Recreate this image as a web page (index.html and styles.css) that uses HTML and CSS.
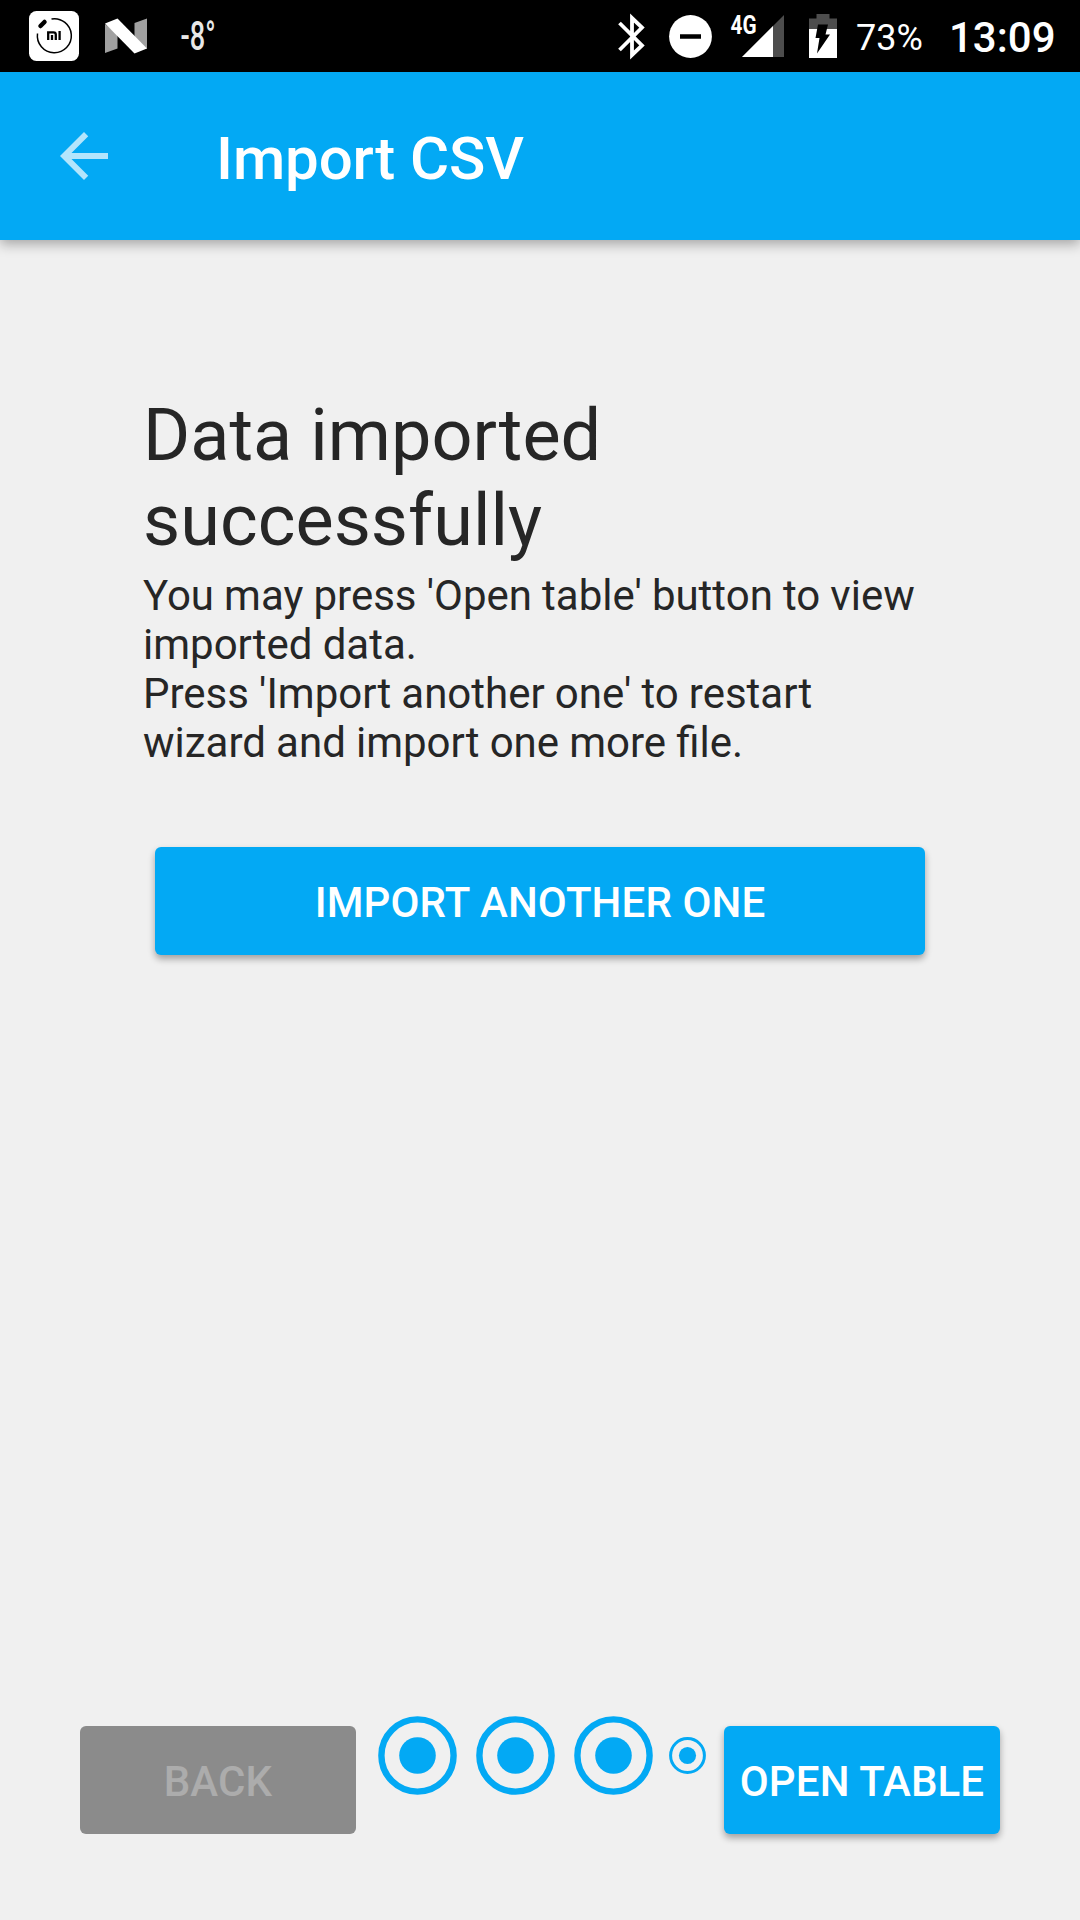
FILE: index.html
```html
<!DOCTYPE html>
<html lang="en">
<head>
<meta charset="utf-8">
<title>Import CSV</title>
<link rel="stylesheet" href="styles.css">
</head>
<body>
<header class="status-bar">
  <div class="status-group">
    <svg width="50" height="72" viewBox="29 0 50 72">
      <rect x="29" y="11" width="50" height="50" rx="7.5" fill="#fff"/>
      <path d="M51.500 19A17 17 0 1 1 37.500 33.500" fill="none" stroke="#000" stroke-width="1.500"/>
      <path d="M40.500 26L44.500 22" stroke="#000" stroke-width="4.500" stroke-linecap="round"/>
      <path d="M48.200 40V32.300H53.500Q55.800 32.300 55.800 34.500V40M52 35V40M59.600 31V40" fill="none" stroke="#000" stroke-width="2.300"/>
    </svg>
    <svg width="42" height="72" viewBox="105 0 42 72">
      <path d="M105 24L117.500 34V48.500L105 53ZM134.500 23L147 18.500V49L134.500 38Z" fill="#a0a0a0"/>
      <path d="M105 23.500L117.500 18.500L147 48.500L134.500 53.500Z" fill="#fff"/>
    </svg>
    <svg class="temperature" width="60" height="72" viewBox="180 0 60 72">
      <text x="180.500" y="50" font-size="40" textLength="35" lengthAdjust="spacingAndGlyphs">-8°</text>
    </svg>
  </div>
  <div class="status-group status-right">
    <svg class="bluetooth" width="28" height="72" viewBox="618 0 28 72">
      <path d="M619.500 23L642 45.500L632 55V18L642 27.500L619.500 50" fill="none" stroke="#fff" stroke-width="3.800"/>
    </svg>
    <svg class="dnd" width="44" height="72" viewBox="669 0 44 72">
      <circle cx="690.500" cy="36.500" r="21.400" fill="#fff"/>
      <path d="M680 36.500H701" stroke="#000" stroke-width="4.500"/>
    </svg>
    <svg class="signal" width="55" height="72" viewBox="730 0 55 72">
      <path d="M784 15V57H742Z" fill="#4d4d4d"/>
      <path d="M773 26V57H742Z" fill="#fff"/>
      <text x="730.500" y="33.500" font-size="25" font-weight="700" textLength="26" lengthAdjust="spacingAndGlyphs">4G</text>
    </svg>
    <svg class="battery" width="28" height="72" viewBox="809 0 28 72">
      <path d="M809 29V18.500H816.500V14H829.500V18.500H837V29Z" fill="#4d4d4d"/>
      <path d="M809 29H837V58H809Z" fill="#fff"/>
      <path d="M818 24.500H828L825.500 34.500H830L817 53.500L819.500 38H815.500Z" fill="#000"/>
    </svg>
    <span class="percent">73%</span>
    <time class="clock">13:09</time>
  </div>
</header>
<div class="app-bar">
  <svg class="back-arrow" width="72" height="72" viewBox="0 0 24 24">
    <path d="M20 11H7.830l5.590-5.590L12 4l-8 8 8 8 1.410-1.410L7.830 13H20z" fill="#b3e5fc"/>
  </svg>
  <h1 class="title">Import CSV</h1>
</div>
<main class="content">
  <h2 class="heading">Data imported<br>successfully</h2>
  <p class="message">You may press 'Open table' button to view<br>imported data.<br>Press 'Import another one' to restart<br>wizard and import one more file.</p>
  <button class="button import">IMPORT ANOTHER ONE</button>
</main>
<footer class="wizard-nav">
  <button class="button nav-button" disabled>BACK</button>
  <div class="steps">
    <svg class="step" viewBox="0 0 79 79"><circle cx="39.500" cy="39.500" r="36.100"/><circle class="core" cx="39.500" cy="39.500" r="18.300"/></svg>
    <svg class="step" viewBox="0 0 79 79"><circle cx="39.500" cy="39.500" r="36.100"/><circle class="core" cx="39.500" cy="39.500" r="18.300"/></svg>
    <svg class="step" viewBox="0 0 79 79"><circle cx="39.500" cy="39.500" r="36.100"/><circle class="core" cx="39.500" cy="39.500" r="18.300"/></svg>
    <svg class="step small" viewBox="0 0 79 79"><circle cx="39.500" cy="39.500" r="36.100"/><circle class="core" cx="39.500" cy="39.500" r="18.300"/></svg>
  </div>
  <button class="button nav-button">OPEN TABLE</button>
</footer>
</body>
</html>
```
FILE: styles.css
```css
* {
  box-sizing: border-box;
}

body {
  margin: 0;
  width: 1080px;
  height: 1920px;
  display: flex;
  flex-direction: column;
  overflow: hidden;
  background: #f0f0f0;
  color: #262626;
  font-family: Roboto, sans-serif;
}

svg {
  display: block;
  flex: none;
  overflow: visible;
}

.status-bar {
  flex: none;
  height: 72px;
  padding: 0 27px 0 29px;
  display: flex;
  justify-content: space-between;
  background: #000;
  color: #fff;
}

.status-bar text {
  fill: #fff;
}

.status-group {
  display: flex;
  gap: 26px;
}

.temperature {
  margin-left: 7px;
}

.status-bar .temperature text {
  fill: #e8e8e8;
  font-weight: 500;
}

.status-right {
  gap: 0;
}

.dnd {
  margin-left: 23px;
}

.signal {
  margin-left: 17px;
}

.battery {
  margin-left: 24px;
}

.percent {
  margin-left: 19px;
  width: 93px;
  padding-top: 1px;
  font-size: 36px;
  line-height: 74px;
}

.clock {
  width: 104px;
  padding-top: 1px;
  font-size: 42px;
  font-weight: 500;
  line-height: 74px;
  white-space: nowrap;
}

.app-bar {
  flex: none;
  height: 168px;
  padding-left: 48px;
  display: flex;
  align-items: center;
  background: #03a9f4;
  box-shadow: 0 4px 12px rgba(0, 0, 0, 0.32);
}

.title {
  margin: 0 0 0 96px;
  padding: 5px 0 0;
  color: #fff;
  font-size: 60px;
  font-weight: 500;
  line-height: 70px;
  letter-spacing: -0.1px;
  white-space: nowrap;
}

.content {
  flex: 1;
  padding: 153px 143px 0;
  display: flex;
  flex-direction: column;
}

.heading {
  margin: 0;
  font-size: 72px;
  font-weight: 400;
  line-height: 85px;
  letter-spacing: 0.05px;
}

.message {
  margin: 8px 0 0;
  font-size: 42px;
  line-height: 49px;
  word-spacing: -0.3px;
  white-space: nowrap;
}

.button {
  height: 108px;
  padding: 2px 0 0;
  border: 0;
  border-radius: 6px;
  background: #03a9f4;
  color: #fff;
  box-shadow: 0 4px 7px rgba(0, 0, 0, 0.33);
  font: 500 42px/49px Roboto, sans-serif;
  letter-spacing: 0.12px;
  white-space: nowrap;
}

.button:disabled {
  background: #8b8b8b;
  color: #acacac;
  box-shadow: none;
}

.import {
  margin: 80px 12px 0;
}

.wizard-nav {
  flex: none;
  height: 204px;
  padding: 0 80px;
  display: flex;
  justify-content: space-between;
}

.nav-button {
  width: 276px;
  margin-top: 10px;
}

.steps {
  height: 79px;
  padding-left: 3px;
  display: flex;
  align-items: center;
  gap: 19px;
}

.step {
  width: 79px;
  height: 79px;
  fill: none;
  stroke: #03a9f4;
  stroke-width: 6.400;
}

.step .core {
  fill: #03a9f4;
  stroke: none;
}

.small {
  width: 37px;
  height: 37px;
  margin-left: -3px;
}
```
